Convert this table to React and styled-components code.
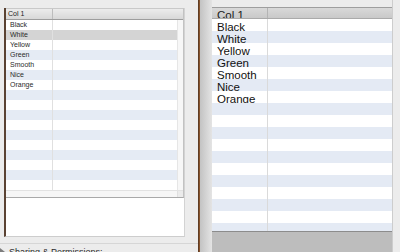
import React from 'react';
import styled, { createGlobalStyle } from 'styled-components';

const colors = ['Black', 'White', 'Yellow', 'Green', 'Smooth', 'Nice', 'Orange'];

const GlobalStyle = createGlobalStyle`
  html, body {
    margin: 0;
    padding: 0;
    width: 400px;
    height: 252px;
    overflow: hidden;
    background: #ececec;
    font-family: "Liberation Sans", Arial, sans-serif;
  }
  * {
    box-sizing: border-box;
  }
`;

const Screen = styled.div`
  display: flex;
  width: 400px;
  height: 252px;
  overflow: hidden;
`;

/* ---------- small inspector window on the left ---------- */

const LeftPane = styled.div`
  width: 198px;
  display: flex;
  flex-direction: column;
  background: #ececec;
  padding-top: 8px;
  overflow: hidden;

  & > * {
    flex-shrink: 0;
  }
`;

const Sheet = styled.div`
  margin-left: 4px;
  width: 181px;
  height: 229px;
  background: #fff;
  border-left: 2px solid #5a4232;
  border-right: 1px solid #d3d3d3;
  border-bottom: 1px solid #cdcdcd;
`;

const SmallTable = styled.div`
  display: flex;
  flex-direction: column;
  border-top: 1px solid #c9c9c9;
  border-bottom: 1px solid #a9a9a9;
  border-right: 1px solid #c2c2c2;
`;

const SmallHeader = styled.div`
  display: flex;
  height: 11px;
  background: linear-gradient(#ececec, #d8d8d8);
  border-bottom: 1px solid #9d9d9d;
  font-size: 7px;
  line-height: 10px;
  color: #222;
`;

const SmallHeadCell = styled.div`
  width: ${p => (p.$first ? '47px' : 'auto')};
  flex: ${p => (p.$first ? 'none' : '1')};
  padding-left: 2px;
  border-right: ${p => (p.$first ? '1px solid #bdbdbd' : 'none')};
`;

const SmallBody = styled.div`
  display: flex;
  height: 170px;
`;

const SmallRows = styled.div`
  flex: 1;
  overflow: hidden;
`;

const SmallRow = styled.div`
  display: flex;
  height: 10px;
  background: ${p => (p.$selected ? '#d4d4d4' : p.$striped ? '#e5ebf4' : '#fff')};
  font-size: 7px;
  line-height: 10px;
  color: #2b2b2b;
`;

const SmallCell = styled.div`
  width: 47px;
  padding-left: 4px;
  border-right: 1px solid #e0e0e0;
  white-space: nowrap;
  overflow: hidden;
`;

const VScroll = styled.div`
  width: 6px;
  background: #f7f7f7;
  border-left: 1px solid #e6e6e6;
`;

const HScroll = styled.div`
  display: flex;
  height: 7px;
  border-top: 1px solid #e2e2e2;
`;

const HTrack = styled.div`
  flex: 1;
  background: #f6f6f6;
`;

const Corner = styled.div`
  width: 6px;
  background: #ebebeb;
  border-left: 1px solid #e0e0e0;
`;

const Separator = styled.div`
  margin-top: 6px;
  height: 1px;
  background: #d6d6d6;
`;

const SectionTitle = styled.div`
  display: flex;
  align-items: flex-start;
  gap: 4px;
  margin-top: 3px;
  font-size: 9px;
  line-height: 10px;
  color: #2a2a2a;
  white-space: nowrap;
`;

const Disclosure = styled.span`
  width: 0;
  height: 0;
  margin-top: 1px;
  border-top: 4px solid transparent;
  border-bottom: 4px solid transparent;
  border-left: 5px solid #7d7d7d;
`;

/* ---------- window edge between the two windows ---------- */

const WindowEdge = styled.div`
  width: 2px;
  background: linear-gradient(to right, #4b3122, #9c5f2f);
`;

/* ---------- large table window on the right ---------- */

const RightPane = styled.div`
  flex: 1;
  display: flex;
  background: #ececec;
`;

const Shade = styled.div`
  width: 12px;
  background: linear-gradient(to right, #c3c3c3, #e4e4e4);
`;

const BigColumn = styled.div`
  width: 181px;
  display: flex;
  flex-direction: column;
  padding-top: 7px;
  border-right: 1px solid #cdcdcd;
`;

const BigHeader = styled.div`
  display: flex;
  height: 12px;
  background: linear-gradient(#d9d9d9, #c9c9c9);
  border-top: 1px solid #9e9e9e;
  border-bottom: 1px solid #aaaaaa;
  overflow: hidden;
  font-size: 11.5px;
  line-height: 12px;
  color: #1a1a1a;
`;

const BigHeadCell = styled.div`
  width: ${p => (p.$first ? '56px' : 'auto')};
  flex: ${p => (p.$first ? 'none' : '1')};
  padding: 1px 0 0 5px;
  border-right: ${p => (p.$first ? '1px solid #b4b4b4' : 'none')};
  white-space: nowrap;
`;

const BigBody = styled.div`
  height: 212px;
  flex-shrink: 0;
  overflow: hidden;
  background: #fff;
`;

const BigRow = styled.div`
  display: flex;
  height: 12px;
  overflow: hidden;
  background: ${p => (p.$striped ? '#e4eaf4' : '#fff')};
  font-size: 11.5px;
  line-height: 12px;
  color: #111;
`;

const BigCell = styled.div`
  width: 56px;
  padding: 2px 0 0 5px;
  border-right: 1px solid #dadada;
  white-space: nowrap;
`;

const Well = styled.div`
  flex: 1;
  background: #bdbdbd;
  border-top: 1px solid #8c8c8c;
`;

const Margin = styled.div`
  flex: 1;
`;

export default function App() {
  const smallRows = Array.from({ length: 17 }, (_, i) => colors[i] || '');
  const bigRows = Array.from({ length: 18 }, (_, i) => colors[i] || '');

  return (
    <>
      <GlobalStyle />
      <Screen>
        <LeftPane>
          <Sheet>
            <SmallTable>
              <SmallHeader>
                <SmallHeadCell $first>Col 1</SmallHeadCell>
                <SmallHeadCell />
              </SmallHeader>
              <SmallBody>
                <SmallRows>
                  {smallRows.map((name, i) => (
                    <SmallRow key={i} $selected={i === 1} $striped={i % 2 === 1}>
                      <SmallCell>{name}</SmallCell>
                    </SmallRow>
                  ))}
                </SmallRows>
                <VScroll />
              </SmallBody>
              <HScroll>
                <HTrack />
                <Corner />
              </HScroll>
            </SmallTable>
          </Sheet>
          <Separator />
          <SectionTitle>
            <Disclosure />
            Sharing &amp; Permissions:
          </SectionTitle>
        </LeftPane>

        <WindowEdge />

        <RightPane>
          <Shade />
          <BigColumn>
            <BigHeader>
              <BigHeadCell $first>Col 1</BigHeadCell>
              <BigHeadCell />
            </BigHeader>
            <BigBody>
              {bigRows.map((name, i) => (
                <BigRow key={i} $striped={i % 2 === 1}>
                  <BigCell>{name}</BigCell>
                </BigRow>
              ))}
            </BigBody>
            <Well />
          </BigColumn>
          <Margin />
        </RightPane>
      </Screen>
    </>
  );
}
